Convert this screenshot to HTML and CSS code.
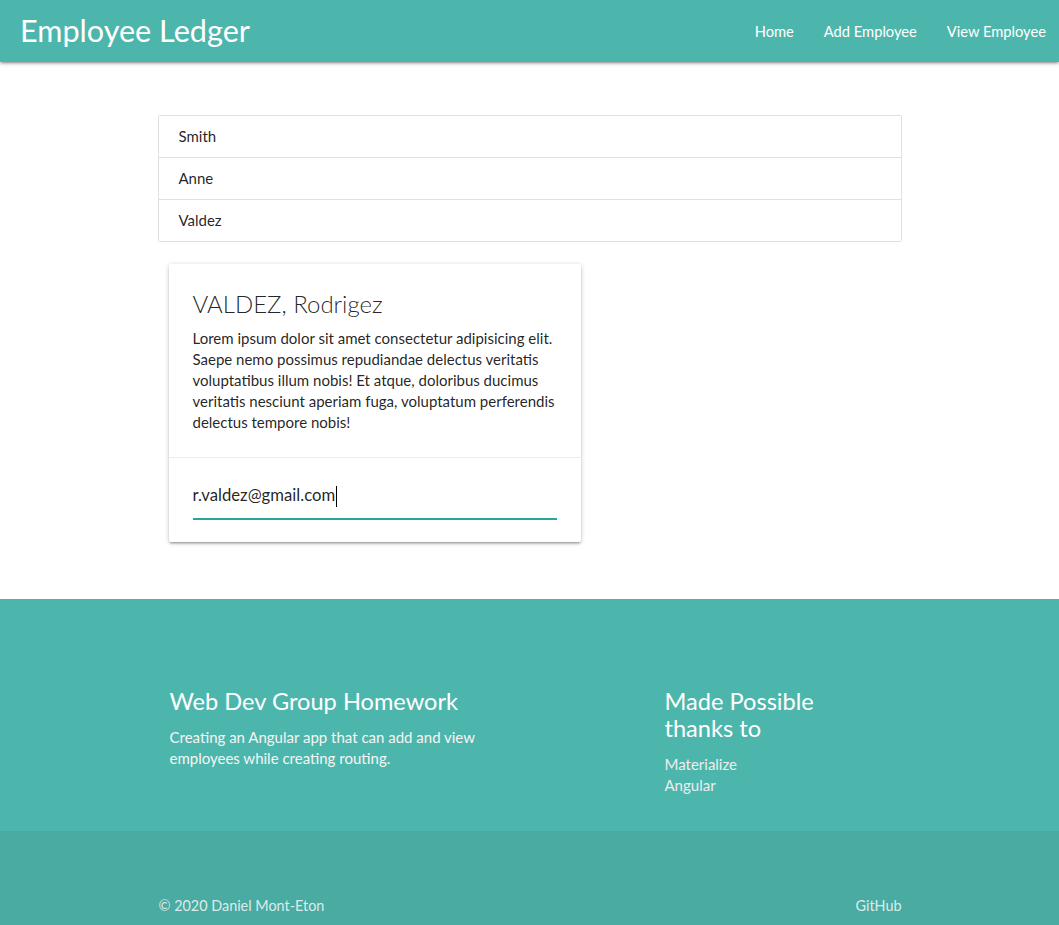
FILE: index.html
```html
<!DOCTYPE html>
<html lang="en">
<head>
<meta charset="utf-8">
<title>Employee Ledger</title>
<link rel="stylesheet" href="styles.css">
</head>
<body>
<nav class="nav">
  <a class="brand" href="#">Employee Ledger</a>
  <ul class="nav-links">
    <li><a href="#">Home</a></li>
    <li><a href="#">Add Employee</a></li>
    <li><a href="#">View Employee</a></li>
  </ul>
</nav>

<main class="container">
  <ul class="collection">
    <li class="collection-item">Smith</li>
    <li class="collection-item">Anne</li>
    <li class="collection-item">Valdez</li>
  </ul>

  <div class="row">
    <div class="col col-card">
      <div class="card">
        <div class="card-content">
          <h2 class="card-title">VALDEZ, Rodrigez</h2>
          <p class="card-text">Lorem ipsum dolor sit amet consectetur adipisicing elit. Saepe nemo possimus repudiandae delectus veritatis voluptatibus illum nobis! Et atque, doloribus ducimus veritatis nesciunt aperiam fuga, voluptatum perferendis delectus tempore nobis!</p>
        </div>
        <div class="card-action">
          <div class="input-field"><span class="input-value">r.valdez@gmail.com</span><span class="caret"></span></div>
        </div>
      </div>
    </div>
  </div>
</main>

<footer class="page-footer">
  <div class="footer-inner">
    <div class="col footer-left">
      <h5 class="footer-title">Web Dev Group Homework</h5>
      <p class="footer-text">Creating an Angular app that can add and view employees while creating routing.</p>
    </div>
    <div class="col footer-right">
      <h5 class="footer-title">Made Possible thanks to</h5>
      <ul class="footer-links">
        <li><a href="#">Materialize</a></li>
        <li><a href="#">Angular</a></li>
      </ul>
    </div>
  </div>
  <div class="footer-copyright">
    <div class="copyright-inner">
      <span>© 2020 Daniel Mont-Eton</span>
      <a href="#">GitHub</a>
    </div>
  </div>
</footer>
</body>
</html>
```

FILE: styles.css
```css
* { box-sizing: border-box; }

html, body {
  margin: 0;
  padding: 0;
}

body {
  font-family: Lato, "Open Sans", "Liberation Sans", sans-serif;
  font-size: 15px;
  line-height: 1.5;
  color: rgba(0, 0, 0, 0.87);
  background: #fff;
}

a { text-decoration: none; color: inherit; }
ul { list-style: none; margin: 0; padding: 0; }

/* NAV */
.nav {
  height: 62px;
  background: #4db6ac;
  color: #fff;
  display: flex;
  align-items: center;
  justify-content: space-between;
  box-shadow: 0 2px 2px 0 rgba(0,0,0,0.14), 0 3px 1px -2px rgba(0,0,0,0.12), 0 1px 5px 0 rgba(0,0,0,0.2);
  position: relative;
  z-index: 2;
}

.brand {
  font-size: 30.6px;
  padding-left: 20px;
  line-height: 62px;
}

.nav-links {
  display: flex;
  height: 100%;
  padding-right: 0;
}

.nav-links a {
  display: block;
  padding: 0 15px;
  line-height: 62px;
  font-size: 14.7px;
}

.nav-links li:last-child a {
  padding-right: 13px;
}

/* MAIN */
.container {
  width: 744px;
  margin: 0 auto;
  padding-top: 53px;
  padding-bottom: 57px;
}

.collection {
  border: 1px solid #e0e0e0;
  border-radius: 2px;
  margin: 0 0 22px;
}

.collection-item {
  padding: 0 20px;
  line-height: 41px;
  height: 42px;
  border-bottom: 1px solid #e0e0e0;
  background: #fff;
}

.collection-item:last-child {
  border-bottom: 0;
  height: 41px;
}

.row {
  display: flex;
}

.col {
  padding: 0 11px;
}

.col-card {
  width: 434px;
}

.card {
  background: #fff;
  border-radius: 2px;
  box-shadow: 0 2px 2px 0 rgba(0,0,0,0.14), 0 3px 1px -2px rgba(0,0,0,0.12), 0 1px 5px 0 rgba(0,0,0,0.2);
}

.card-content {
  padding: 24px 24px 24px;
}

.card-title {
  font-size: 24px;
  font-weight: 300;
  line-height: 32px;
  margin: 0 0 8px;
  color: rgba(0, 0, 0, 0.87);
}

.card-text {
  margin: 0;
  line-height: 21px;
  font-size: 15px;
}

.card-action {
  border-top: 1px solid rgba(160, 160, 160, 0.2);
  padding: 16px 24px 22px;
}

.input-field {
  height: 46px;
  border-bottom: 2px solid #26a69a;
  display: flex;
  align-items: center;
  font-size: 16.7px;
  color: rgba(0, 0, 0, 0.87);
}

.caret {
  display: inline-block;
  width: 1px;
  height: 21px;
  background: #000;
  margin-left: 1px;
}

/* FOOTER */
.page-footer {
  background: #4db6ac;
  color: #fff;
}

.footer-inner {
  width: 744px;
  margin: 0 auto;
  display: flex;
  padding: 89px 0 35px;
}

.footer-left {
  width: 372px;
  padding-left: 12px;
}

.footer-right {
  width: 220px;
  margin-left: 124px;
}

.footer-title {
  font-size: 23.6px;
  font-weight: 400;
  line-height: 27px;
  margin: 0 0 12px;
}

.footer-text {
  margin: 0;
  line-height: 21px;
  color: #f5f5f5;
  width: 320px;
}

.footer-links {
  margin-top: 10px;
}

.footer-links li {
  line-height: 21px;
  color: #eeeeee;
}

.footer-copyright {
  background: rgba(51, 51, 51, 0.08);
  height: 95px;
  color: rgba(255, 255, 255, 0.8);
}

.copyright-inner {
  width: 744px;
  margin: 0 auto;
  display: flex;
  justify-content: space-between;
  padding-top: 64px;
  line-height: 21px;
  padding-left: 1px;
  font-size: 14.4px;
}
```
